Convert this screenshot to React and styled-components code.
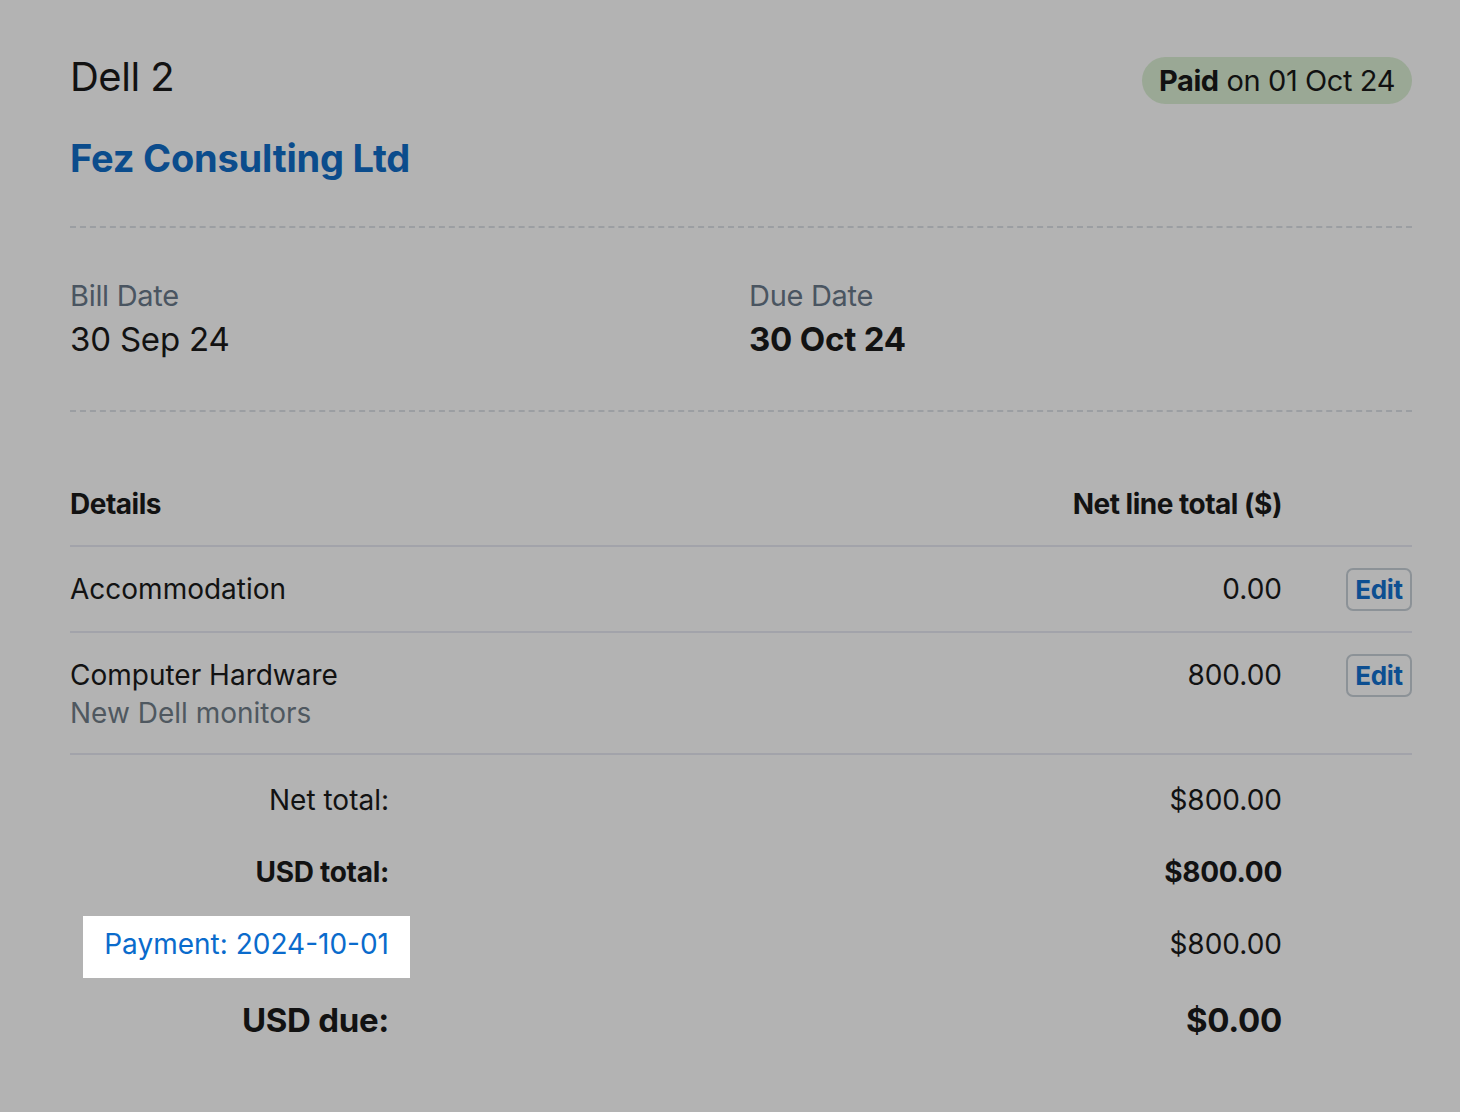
import React from 'react';
import styled, { createGlobalStyle } from 'styled-components';

const GlobalStyle = createGlobalStyle`
  html, body {
    margin: 0;
    padding: 0;
    background: #b3b3b3;
  }
  body {
    font-family: Inter, "Noto Sans", sans-serif;
    color: #121212;
  }
`;

const Page = styled.div`
  padding: 52px 48px 0 70px;
  min-height: 1112px;
  box-sizing: border-box;
`;

const Header = styled.div`
  display: flex;
  justify-content: space-between;
  align-items: flex-start;
`;

const BillName = styled.h1`
  margin: 0;
  font-size: 40px;
  line-height: 50px;
  font-weight: 400;
  letter-spacing: -0.5px;
`;

const Badge = styled.div`
  margin-top: 5px;
  height: 47px;
  display: flex;
  align-items: center;
  padding: 0 17px;
  border-radius: 24px;
  background: #9aa895;
  font-size: 29px;
  letter-spacing: -0.4px;
  color: #111;

  b {
    font-weight: 700;
  }
`;

const Contact = styled.a`
  display: block;
  margin-top: 30px;
  font-size: 38px;
  line-height: 48px;
  font-weight: 700;
  color: #0b4c8c;
  letter-spacing: -0.2px;
  text-decoration: none;
`;

const Dashed = styled.hr`
  margin: 0;
  height: 0;
  border: none;
  border-top: 2px dashed #9b9ea2;
`;

const TopRule = styled(Dashed)`
  margin-top: 44px;
`;

const Dates = styled.div`
  display: grid;
  grid-template-columns: 1fr 1fr;
  column-gap: 16px;
  padding: 50px 0 49px;
`;

const DateLabel = styled.div`
  font-size: 29px;
  line-height: 36px;
  color: #4a5561;
  letter-spacing: -0.3px;
`;

const DateValue = styled.div`
  margin-top: 3px;
  font-size: 33px;
  line-height: 44px;
  font-weight: ${p => (p.bold ? 700 : 400)};
  letter-spacing: -0.2px;
`;

const Table = styled.div`
  margin-top: 72px;
`;

const Row = styled.div`
  display: grid;
  grid-template-columns: 1fr auto 130px;
  align-items: start;
  padding: ${p => (p.head ? '0 0 21px' : '21px 0 20px')};
  border-bottom: 2px solid #a2a3aa;
  font-size: 28px;
  line-height: ${p => (p.head ? '40px' : '38px')};
  letter-spacing: ${p => (p.head ? '-0.5px' : '0px')};
  font-weight: ${p => (p.head ? 700 : 400)};
`;

const Cell = styled.div`
  padding-top: ${p => (p.head ? 0 : '2px')};
  text-align: ${p => (p.right ? 'right' : 'left')};
`;

const SubText = styled.div`
  line-height: 39px;
  color: #4f5860;
`;

const EditButton = styled.button`
  justify-self: end;
  width: 66px;
  height: 43px;
  padding: 0;
  border: 2px solid #8c9297;
  border-radius: 7px;
  background: transparent;
  font-family: inherit;
  font-size: 26px;
  font-weight: 700;
  color: #0d4f91;
  letter-spacing: -0.3px;
  cursor: pointer;
`;

const Totals = styled.div`
  padding-top: 9px;
`;

const TotalRow = styled.div`
  display: grid;
  grid-template-columns: 319px 1fr 130px;
  align-items: center;
  height: ${p => (p.big ? '80px' : '72px')};
  font-size: ${p => (p.big ? '33px' : '28px')};
  font-weight: ${p => (p.bold ? 700 : 400)};
  letter-spacing: ${p => (p.bold ? '-0.3px' : '0px')};
`;

const TotalLabel = styled.div`
  text-align: right;
`;

const TotalValue = styled.div`
  text-align: right;
`;

const PaymentLink = styled.a`
  justify-self: end;
  box-sizing: border-box;
  margin-right: -21px;
  margin-top: 5px;
  padding: 0 21px 5px;
  height: 62px;
  display: flex;
  align-items: center;
  background: #ffffff;
  color: #0a6bcc;
  text-decoration: none;
  font-size: 28px;
  letter-spacing: 0px;
`;

const lines = [
  { name: 'Accommodation', amount: '0.00' },
  { name: 'Computer Hardware', note: 'New Dell monitors', amount: '800.00' },
];

export default function App() {
  return (
    <Page>
      <GlobalStyle />
      <Header>
        <BillName>Dell 2</BillName>
        <Badge>
          <b>Paid</b>&nbsp;on 01 Oct 24
        </Badge>
      </Header>
      <Contact href="#">Fez Consulting Ltd</Contact>
      <TopRule />
      <Dates>
        <div>
          <DateLabel>Bill Date</DateLabel>
          <DateValue>30 Sep 24</DateValue>
        </div>
        <div>
          <DateLabel>Due Date</DateLabel>
          <DateValue bold>30 Oct 24</DateValue>
        </div>
      </Dates>
      <Dashed />
      <Table>
        <Row head>
          <Cell head>Details</Cell>
          <Cell head right>Net line total ($)</Cell>
          <div />
        </Row>
        {lines.map(line => (
          <Row key={line.name}>
            <Cell>
              {line.name}
              {line.note && <SubText>{line.note}</SubText>}
            </Cell>
            <Cell right>{line.amount}</Cell>
            <EditButton>Edit</EditButton>
          </Row>
        ))}
      </Table>
      <Totals>
        <TotalRow>
          <TotalLabel>Net total:</TotalLabel>
          <TotalValue>$800.00</TotalValue>
        </TotalRow>
        <TotalRow bold>
          <TotalLabel>USD total:</TotalLabel>
          <TotalValue>$800.00</TotalValue>
        </TotalRow>
        <TotalRow>
          <PaymentLink href="#">Payment: 2024-10-01</PaymentLink>
          <TotalValue>$800.00</TotalValue>
        </TotalRow>
        <TotalRow bold big>
          <TotalLabel>USD due:</TotalLabel>
          <TotalValue>$0.00</TotalValue>
        </TotalRow>
      </Totals>
    </Page>
  );
}
